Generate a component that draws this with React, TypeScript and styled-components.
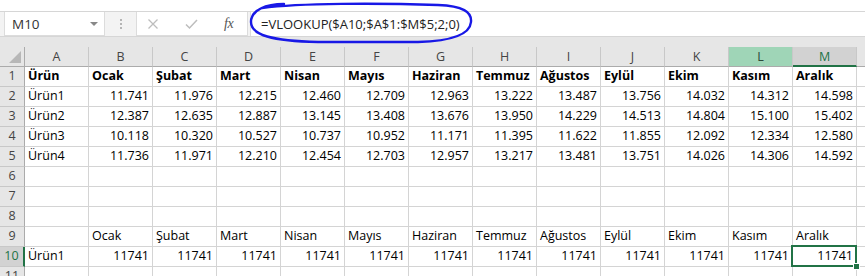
import { Fragment } from "react";
import styled, { createGlobalStyle, css } from "styled-components";

const GlobalStyle = createGlobalStyle`
  html, body {
    margin: 0;
    padding: 0;
    background: #ffffff;
    overflow: hidden;
  }
`;

const GREEN = "#217346";

const Sheet = styled.div`
  position: relative;
  width: 865px;
  height: 276px;
  overflow: hidden;
  background: #ffffff;
  font-family: "Open Sans", "Liberation Sans", sans-serif;
  font-size: 12.5px;
  color: #000;
`;

/* ---------- formula bar ---------- */

const TopStrip = styled.div`
  height: 11px;
  background: #ffffff;
`;

const FormulaBar = styled.div`
  display: flex;
  align-items: stretch;
  height: 26px;
  box-sizing: border-box;
  border-top: 1px solid #d6d6d6;
  border-bottom: 1px solid #d6d6d6;
  background: #f3f3f3;
  padding-left: 4px;
`;

const NameBox = styled.div`
  display: flex;
  align-items: center;
  justify-content: space-between;
  width: 101px;
  box-sizing: border-box;
  background: #ffffff;
  border: 1px solid #dcdcdc;
  border-top: none;
  padding: 0 6px 0 7px;
  font-size: 13.5px;
  color: #333;
`;

const Caret = styled.span`
  width: 0;
  height: 0;
  border-left: 4px solid transparent;
  border-right: 4px solid transparent;
  border-top: 4px solid #888;
`;

const Grip = styled.div`
  display: flex;
  flex-direction: column;
  justify-content: center;
  gap: 2px;
  width: 31px;
  align-items: center;

  span {
    width: 2px;
    height: 2px;
    background: #b5b5b5;
  }
`;

const ButtonBox = styled.div`
  display: flex;
  align-items: center;
  width: 112px;
  box-sizing: border-box;
  background: #ffffff;
  border: 1px solid #dcdcdc;
  border-top: none;
  padding-left: 10px;
  gap: 26px;
`;

const Fx = styled.span`
  font-family: "Liberation Serif", serif;
  font-style: italic;
  font-size: 14px;
  color: #555;
  letter-spacing: -0.5px;
`;

const FormulaInput = styled.div`
  flex: 1;
  display: flex;
  align-items: center;
  margin-left: 2px;
  padding-left: 10px;
  background: #ffffff;
  border-left: 1px solid #dcdcdc;
  font-size: 13px;
  color: #222;
`;

const Annotation = styled.svg`
  position: absolute;
  left: 0;
  top: 0;
  pointer-events: none;
`;

const GapStrip = styled.div`
  height: 10px;
  background: #e6e6e6;
`;

/* ---------- grid ---------- */

const Grid = styled.div`
  display: grid;
  grid-template-columns: 25px repeat(14, 64px);
  grid-auto-rows: 20px;
`;

const baseCell = css`
  box-sizing: border-box;
  display: flex;
  align-items: flex-end;
  padding-bottom: 2px;
  white-space: nowrap;
  overflow: visible;
`;

const ColHead = styled.div<{ $state?: "sel" | "hover" }>`
  ${baseCell};
  align-items: center;
  padding-bottom: 0;
  justify-content: center;
  background: #e6e6e6;
  border-right: 1px solid #c8c8c8;
  border-bottom: 1px solid #ababab;
  color: #444;
  ${(p) =>
    p.$state === "hover" &&
    css`
      background: #9fd5b7;
      color: #2b4a39;
    `}
  ${(p) =>
    p.$state === "sel" &&
    css`
      background: #d2d2d2;
      color: ${GREEN};
      border-bottom: 2px solid ${GREEN};
    `}
`;

const Corner = styled.div`
  ${baseCell};
  background: #e6e6e6;
  border-right: 1px solid #ababab;
  border-bottom: 1px solid #ababab;
  justify-content: flex-end;
  padding: 0 3px 3px 0;
`;

const CornerTri = styled.span`
  width: 0;
  height: 0;
  border-left: 12px solid transparent;
  border-bottom: 12px solid #b7b7b7;
`;

const RowHead = styled.div<{ $sel?: boolean }>`
  ${baseCell};
  justify-content: center;
  background: #e6e6e6;
  border-right: 1px solid #ababab;
  border-bottom: 1px solid #c8c8c8;
  color: #444;
  ${(p) =>
    p.$sel &&
    css`
      background: #d2d2d2;
      color: ${GREEN};
      border-right: 2px solid ${GREEN};
    `}
`;

const Cell = styled.div<{ $num?: boolean; $bold?: boolean; $active?: boolean }>`
  ${baseCell};
  position: relative;
  border-right: 1px solid #d4d4d4;
  border-bottom: 1px solid #d4d4d4;
  padding-left: 3px;
  padding-right: 3px;
  justify-content: ${(p) => (p.$num ? "flex-end" : "flex-start")};
  font-weight: ${(p) => (p.$bold ? 700 : 400)};
  ${(p) =>
    p.$active &&
    css`
      &::before {
        content: "";
        position: absolute;
        left: -2px;
        top: -2px;
        right: -1px;
        bottom: -1px;
        border: 2px solid ${GREEN};
        z-index: 1;
      }
      &::after {
        content: "";
        position: absolute;
        right: -4px;
        bottom: -4px;
        width: 5px;
        height: 5px;
        background: ${GREEN};
        border: 1px solid #fff;
        z-index: 2;
      }
    `}
`;

// N is only a sliver at the right edge, so its header stays blank
const columns = ["A", "B", "C", "D", "E", "F", "G", "H", "I", "J", "K", "L", "M", "N"];
const months = [
  "Ocak",
  "Şubat",
  "Mart",
  "Nisan",
  "Mayıs",
  "Haziran",
  "Temmuz",
  "Ağustos",
  "Eylül",
  "Ekim",
  "Kasım",
  "Aralık",
];

const data: [string, string[]][] = [
  ["Ürün1", ["11.741", "11.976", "12.215", "12.460", "12.709", "12.963", "13.222", "13.487", "13.756", "14.032", "14.312", "14.598"]],
  ["Ürün2", ["12.387", "12.635", "12.887", "13.145", "13.408", "13.676", "13.950", "14.229", "14.513", "14.804", "15.100", "15.402"]],
  ["Ürün3", ["10.118", "10.320", "10.527", "10.737", "10.952", "11.171", "11.395", "11.622", "11.855", "12.092", "12.334", "12.580"]],
  ["Ürün4", ["11.736", "11.971", "12.210", "12.454", "12.703", "12.957", "13.217", "13.481", "13.751", "14.026", "14.306", "14.592"]],
];

const XIcon = () => (
  <svg width="12" height="12" viewBox="0 0 12 12">
    <path d="M1.5 1.5 L10.5 10.5 M10.5 1.5 L1.5 10.5" stroke="#bdbdbd" strokeWidth="1.3" fill="none" />
  </svg>
);

const CheckIcon = () => (
  <svg width="13" height="12" viewBox="0 0 13 12">
    <path d="M1 6.5 L4.5 10 L12 2" stroke="#bdbdbd" strokeWidth="1.5" fill="none" />
  </svg>
);

type CellData = { text: string; num?: boolean; bold?: boolean };

const buildRows = (): CellData[][] => {
  const rows: CellData[][] = [];
  rows.push([{ text: "Ürün", bold: true }, ...months.map((m) => ({ text: m, bold: true }))]);
  data.forEach(([name, vals]) => rows.push([{ text: name }, ...vals.map((v) => ({ text: v, num: true }))]));
  for (let i = 0; i < 3; i++) rows.push([]);
  rows.push([{ text: "" }, ...months.map((m) => ({ text: m }))]);
  rows.push([{ text: "Ürün1" }, ...months.map(() => ({ text: "11741", num: true }))]);
  rows.push([]);
  return rows;
};

export default function App() {
  const rows = buildRows();
  return (
    <Sheet>
      <GlobalStyle />
      <TopStrip />
      <FormulaBar>
        <NameBox>
          M10
          <Caret />
        </NameBox>
        <Grip>
          <span />
          <span />
          <span />
        </Grip>
        <ButtonBox>
          <XIcon />
          <CheckIcon />
          <Fx>fx</Fx>
        </ButtonBox>
        <FormulaInput>=VLOOKUP($A10;$A$1:$M$5;2;0)</FormulaInput>
      </FormulaBar>
      <GapStrip />
      <Grid>
        <Corner>
          <CornerTri />
        </Corner>
        {columns.map((l) => (
          <ColHead key={l} $state={l === "M" ? "sel" : l === "L" ? "hover" : undefined}>
            {l === "N" ? "" : l}
          </ColHead>
        ))}
        {rows.map((row, r) => (
          <Fragment key={r}>
            <RowHead $sel={r === 9}>{r + 1}</RowHead>
            {columns.map((l, c) => {
              const cell = row[c];
              return (
                <Cell key={l} $num={cell?.num} $bold={cell?.bold} $active={r === 9 && l === "M"}>
                  {cell?.text}
                </Cell>
              );
            })}
          </Fragment>
        ))}
      </Grid>
      <Annotation width="865" height="50" viewBox="0 0 865 50">
        <path
          d="M284 4 C266 4 251 10 251 22 C251 35 272 41 318 42 L418 42 C452 41 470 34 471 22 C472 12 463 6 438 5 C378 3 300 3 262 8"
          stroke="#1818e6"
          strokeWidth="2.4"
          fill="none"
          strokeLinecap="round"
        />
      </Annotation>
    </Sheet>
  );
}
